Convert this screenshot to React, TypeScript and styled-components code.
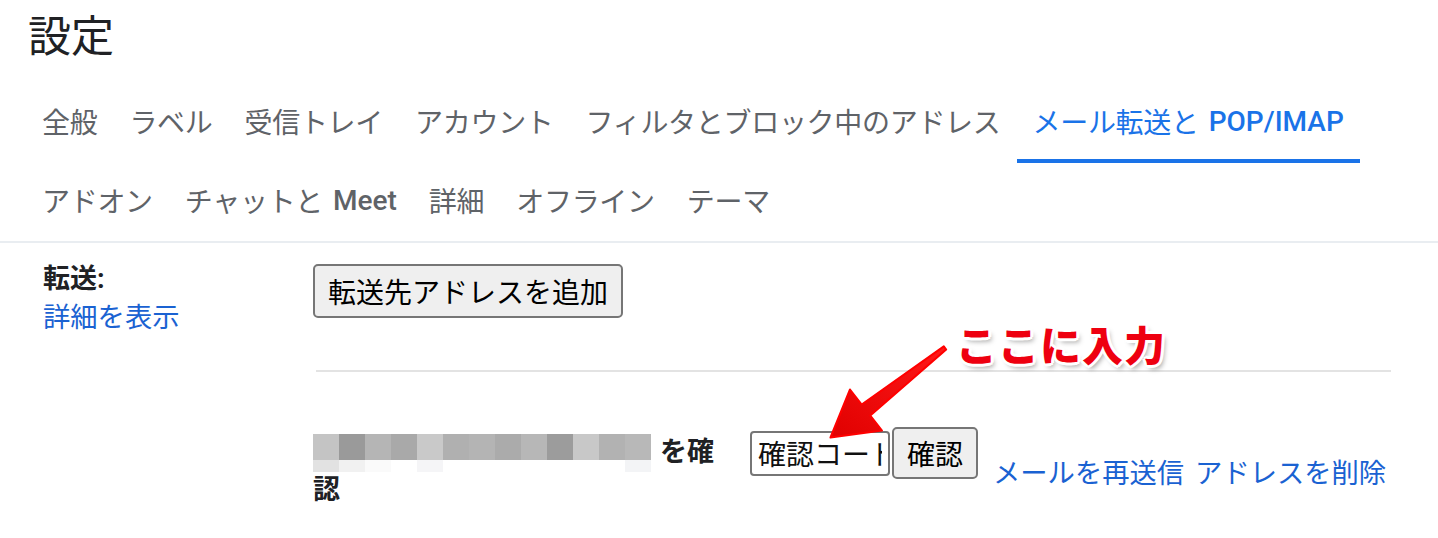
import React from 'react';
import styled, { createGlobalStyle } from 'styled-components';

// 설정 화면 탭 데이터
const tabRows = [
  [
    { label: '全般' },
    { label: 'ラベル' },
    { label: '受信トレイ' },
    { label: 'アカウント' },
    { label: 'フィルタとブロック中のアドレス' },
    { label: 'メール転送と', latin: 'POP/IMAP', active: true },
  ],
  [
    { label: 'アドオン' },
    { label: 'チャットと', latin: 'Meet' },
    { label: '詳細' },
    { label: 'オフライン' },
    { label: 'テーマ' },
  ],
];

// 모자이크 처리된 메일 주소 색상
const mosaicTop = ['#c4c4c4', '#9a9a9a', '#b5b5b5', '#a9a9a9', '#c9c9c9', '#b0b0b0', '#b4b4b4', '#ababab', '#b7b7b7', '#9c9c9c', '#c8c8c8', '#b2b2b2', '#b8b8b8'];
const mosaicBottom = ['#e2e2e2', '#f1f1f1', '#fafafa', '#ffffff', '#f5f5f7', '#ffffff', '#ffffff', '#ffffff', '#ffffff', '#ffffff', '#ffffff', '#ffffff', '#f3f4f6'];

const GlobalStyle = createGlobalStyle`
  body {
    margin: 0;
    background: #fff;
    font-family: Roboto, "Noto Sans CJK JP", sans-serif;
  }
`;

const Page = styled.div`
  position: relative;
  width: 1438px;
  height: 538px;
  overflow: hidden;
`;

const Header = styled.header`
  padding: 11px 28px 0;
`;

const Title = styled.h1`
  margin: 0;
  font-size: 43px;
  line-height: 52px;
  font-weight: 400;
  color: #202124;
`;

const Nav = styled.nav`
  margin-top: 20px;
  padding-left: 26px;
  border-bottom: 2px solid #e9edf1;
`;

const TabRow = styled.div<{ $height: number }>`
  display: flex;
  height: ${(p) => p.$height}px;
`;

const Tab = styled.div<{ $active?: boolean }>`
  display: flex;
  align-items: center;
  padding: 0 16px;
  font-size: 28px;
  letter-spacing: -0.3px;
  white-space: nowrap;
  color: ${(p) => (p.$active ? '#1a73e8' : '#5f6368')};
  border-bottom: 4px solid ${(p) => (p.$active ? '#1a73e8' : 'transparent')};
`;

const Latin = styled.span`
  font-family: Roboto, sans-serif;
  font-weight: 500;
  margin-left: 10px;
  letter-spacing: 0;
`;

const Content = styled.section`
  display: grid;
  grid-template-columns: 270px 1078px;
  padding: 17px 0 0 43px;
`;

const LabelCell = styled.div`
  line-height: 39px;
`;

const Label = styled.div`
  font-size: 27px;
  font-weight: 700;
  color: #202124;
`;

const Link = styled.a`
  font-size: 27.3px;
  color: #1a62d2;
  text-decoration: none;
  white-space: nowrap;
  cursor: pointer;
`;

const ValueCell = styled.div`
  display: flex;
  flex-direction: column;
  align-items: flex-start;
`;

const Button = styled.button<{ $height: number }>`
  flex-shrink: 0;
  height: ${(p) => p.$height}px;
  padding: 0 13px;
  border: 2px solid #767676;
  border-radius: 5px;
  background: #efefef;
  font-family: "Noto Sans CJK JP", sans-serif;
  font-size: 28px;
  white-space: nowrap;
  color: #000;
`;

const Divider = styled.hr`
  align-self: stretch;
  margin: 52px 0 0 3px;
  border: none;
  border-top: 2px solid #e3e3e3;
`;

const ConfirmRow = styled.div`
  display: flex;
  align-items: flex-start;
  margin-top: 55px;
`;

const Address = styled.p`
  flex-shrink: 0;
  width: 410px;
  margin: 7px 0 0;
  font-size: 27px;
  font-weight: 700;
  line-height: 37px;
  color: #202124;
`;

const Mosaic = styled.svg`
  vertical-align: top;
  margin-right: 9px;
`;

const CodeGroup = styled.div`
  display: flex;
  flex-shrink: 0;
  align-items: center;
  gap: 2px;
  margin-left: 27px;
`;

const CodeInput = styled.input`
  width: 140px;
  height: 45px;
  box-sizing: border-box;
  padding: 0 6px;
  border: 2px solid #767676;
  border-radius: 4px;
  font-family: "Noto Sans CJK JP", sans-serif;
  font-size: 28px;

  &::placeholder {
    color: #111;
  }
`;

const Links = styled.div`
  display: flex;
  flex-shrink: 0;
  gap: 11px;
  margin: 28px 0 0 15px;
  line-height: 39px;
`;

// 주석 오버레이
const Callout = styled.div`
  position: absolute;
  left: 956px;
  top: 315px;
  font-family: "Noto Sans CJK JP", sans-serif;
  font-size: 41px;
  font-weight: 900;
  line-height: 56px;
  letter-spacing: 1px;
  color: #ee0010;
  text-shadow:
    3px 0 0 #fff, -3px 0 0 #fff, 0 3px 0 #fff, 0 -3px 0 #fff,
    2px 2px 0 #fff, -2px -2px 0 #fff, 2px -2px 0 #fff, -2px 2px 0 #fff,
    3px 4px 5px rgba(0, 0, 0, 0.35);
`;

const Arrow = styled.svg`
  position: absolute;
  left: 815px;
  top: 335px;
  overflow: visible;
`;

const App = () => (
  <Page>
    <GlobalStyle />
    <Header>
      <Title>設定</Title>
    </Header>

    <Nav>
      {tabRows.map((row, i) => (
        <TabRow key={i} $height={i === 0 ? 80 : 78}>
          {row.map((tab) => (
            <Tab key={tab.label} $active={tab.active}>
              {tab.label}
              {tab.latin && <Latin>{tab.latin}</Latin>}
            </Tab>
          ))}
        </TabRow>
      ))}
    </Nav>

    <Content>
      <LabelCell>
        <Label>転送:</Label>
        <Link>詳細を表示</Link>
      </LabelCell>

      <ValueCell>
        <Button $height={54} style={{ marginTop: 4 }}>転送先アドレスを追加</Button>
        <Divider />
        <ConfirmRow>
          <Address>
            <Mosaic width="338" height="38" viewBox="0 0 338 38">
              {mosaicTop.map((c, i) => (
                <rect key={`t${i}`} x={i * 26} y="0" width="26" height="26" fill={c} />
              ))}
              {mosaicBottom.map((c, i) => (
                <rect key={`b${i}`} x={i * 26} y="26" width="26" height="12" fill={c} />
              ))}
            </Mosaic>
            を確認
          </Address>
          <CodeGroup>
            <CodeInput placeholder="確認コード" />
            <Button $height={52}>確認</Button>
          </CodeGroup>
          <Links>
            <Link>メールを再送信</Link>
            <Link>アドレスを削除</Link>
          </Links>
        </ConfirmRow>
      </ValueCell>
    </Content>

    <Callout>ここに入力</Callout>
    <Arrow width="140" height="110" viewBox="0 0 140 110">
      <defs>
        <linearGradient id="arrowFill" x1="1" y1="0" x2="0" y2="1">
          <stop offset="0" stopColor="#ff1a1a" />
          <stop offset="1" stopColor="#e00000" />
        </linearGradient>
      </defs>
      <polygon
        points="15.5,102.5 35,54.5 46.7,69.5 128.8,11.4 131.2,14.6 55.3,80.5 67,95.5"
        fill="url(#arrowFill)"
        stroke="#f00"
        strokeWidth="2"
        strokeLinejoin="round"
      />
    </Arrow>
  </Page>
);

export default App;
